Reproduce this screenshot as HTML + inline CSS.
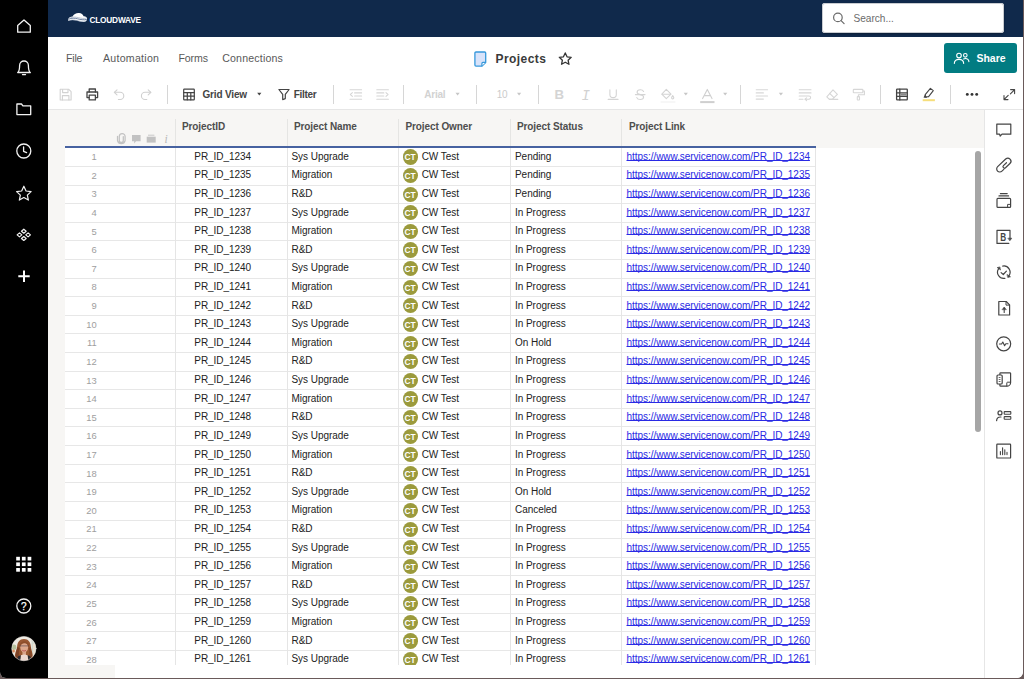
<!DOCTYPE html>
<html lang="en">
<head>
<meta charset="utf-8">
<title>Projects</title>
<style>
*{box-sizing:border-box;margin:0;padding:0}
html,body{width:1024px;height:679px;overflow:hidden;background:#6a5a5a;font-family:"Liberation Sans",Arial,sans-serif}
#app{position:absolute;left:0;top:0;width:1023px;height:678px;background:#fff;border-radius:0 0 6px 6px;overflow:hidden}
.ov{position:absolute;left:0;top:0;overflow:visible}
#side{position:absolute;left:0;top:0;width:48px;height:678px;background:#000}
#side svg{position:absolute;left:0}
#top{position:absolute;left:48px;top:0;width:976px;height:37px;background:#10294b}
#search{position:absolute;left:774.3px;top:3px;width:181.4px;height:30.2px;background:#fff;border-radius:3px;box-shadow:0 0 0 1px #c9ccd1 inset, 0 1px 2px rgba(0,0,0,.3)}
#search span{position:absolute;left:31.2px;top:10.4px;font-size:10.1px;line-height:12px;color:#6b6b6b}
#logo{position:absolute;left:41.4px;top:16px;font-size:8.3px;letter-spacing:-.2px;font-weight:bold;color:#fff;line-height:9px}
#menu span{position:absolute;top:52.3px;font-size:10.6px;color:#595959;line-height:12px;white-space:nowrap}
#title{position:absolute;left:495.6px;top:52.2px;font-size:12px;font-weight:bold;color:#3a3a3a;line-height:15px;letter-spacing:.42px}
#share{position:absolute;left:944.4px;top:43.1px;width:72.7px;height:29.8px;background:#027c82;border-radius:3px;color:#fff;font-weight:bold;font-size:10.5px}
#share span{position:absolute;left:32px;top:9px;line-height:12px}
#tb{position:absolute;left:48px;top:78px;width:976px;height:32px;border-bottom:1px solid #e6e6e6;background:#fff}
#tb .sep{position:absolute;top:7px;width:1px;height:18.8px;background:#d6d6d6}
#tb .t{position:absolute;top:10.6px;font-size:10px;line-height:12px;font-weight:bold;color:#444;white-space:nowrap}
#tb .g{color:#cbcbcb;font-weight:normal}
#tb svg{position:absolute}
#gridbg{position:absolute;left:48px;top:110px;width:936px;height:568px;background:#f7f6f4}
#white{position:absolute;left:65px;top:148px;width:919px;height:530px;background:#fff}
#hdr span{position:absolute;top:121px;font-size:10px;font-weight:bold;color:#4e4e4e;letter-spacing:-.1px;line-height:12px;white-space:nowrap}
#hdr i{position:absolute;top:119px;width:1px;height:29px;background:#e5e5e3}
#blue{position:absolute;left:65px;top:146.45px;width:750.8px;height:1.7px;background:#4762a0}
.row{position:absolute;left:65px;width:750.8px;height:18.615px;border-bottom:1px solid #e7e7e7;font-size:10px;letter-spacing:-.045px;line-height:12px;color:#222;white-space:nowrap;background:#fff}
.row span{position:absolute;top:3px}
.row .n{left:0;width:31.5px;text-align:right;color:#9e9e9e;font-size:9.4px;top:2.9px;letter-spacing:-.1px}
.row .c{height:17.6px;top:0;padding-top:2.4px}
.c1{left:110px;width:112px;padding-left:19.3px}
.c2{left:221.5px;width:111.5px;padding-left:5px}
.c3{left:333px;width:111.5px;padding-left:23.7px}
.c4{left:444.5px;width:111.5px;padding-left:5.5px}
.c5{left:556px;width:194px;padding-left:5.5px;color:#2a2ae4}
.c5 u{text-decoration:underline;text-underline-offset:.4px;text-decoration-thickness:.9px;text-decoration-skip-ink:none}
.av{position:absolute;left:4.5px;top:1.1px;width:15.2px;height:15.2px;border-radius:50%;background:#9b9a3c;color:#fff;font-style:normal;font-weight:bold;font-size:8.4px;line-height:16px;text-align:center;letter-spacing:-.1px}
#rail{position:absolute;left:984px;top:110px;width:39px;height:568px;background:#fff;border-left:1px solid #e6e6e6}
#scroll{position:absolute;left:974.8px;top:151.2px;width:5.8px;height:281px;background:#a6a6a6;border-radius:3px}
#vl i{position:absolute;top:148px;width:1px;height:518px;background:#e5e5e5}
#foot{position:absolute;left:48px;top:665.3px;width:936px;height:13px;background:#fff}
#foot i{position:absolute;left:0;top:0;width:66.7px;height:13px;background:#f7f6f4}
</style>
</head>
<body>
<div id="app">
<div id="gridbg"></div>
<div id="white"></div>
<div id="hdr">
<i style="left:175px"></i><i style="left:286.5px"></i><i style="left:398px"></i><i style="left:509.6px"></i><i style="left:621.1px"></i>
<span style="left:182px">ProjectID</span><span style="left:294px">Project Name</span><span style="left:405.5px">Project Owner</span><span style="left:517px">Project Status</span><span style="left:629px">Project Link</span>
</div>
<div class="row" style="top:148.28px"><span class="n">1</span><span class="c c1">PR_ID_1234</span><span class="c c2">Sys Upgrade</span><span class="c c3"><i class="av">CT</i>CW Test</span><span class="c c4">Pending</span><span class="c c5"><u>https://www.servicenow.com/PR_ID_1234</u></span></div>
<div class="row" style="top:166.90px"><span class="n">2</span><span class="c c1">PR_ID_1235</span><span class="c c2">Migration</span><span class="c c3"><i class="av">CT</i>CW Test</span><span class="c c4">Pending</span><span class="c c5"><u>https://www.servicenow.com/PR_ID_1235</u></span></div>
<div class="row" style="top:185.51px"><span class="n">3</span><span class="c c1">PR_ID_1236</span><span class="c c2">R&amp;D</span><span class="c c3"><i class="av">CT</i>CW Test</span><span class="c c4">Pending</span><span class="c c5"><u>https://www.servicenow.com/PR_ID_1236</u></span></div>
<div class="row" style="top:204.12px"><span class="n">4</span><span class="c c1">PR_ID_1237</span><span class="c c2">Sys Upgrade</span><span class="c c3"><i class="av">CT</i>CW Test</span><span class="c c4">In Progress</span><span class="c c5"><u>https://www.servicenow.com/PR_ID_1237</u></span></div>
<div class="row" style="top:222.74px"><span class="n">5</span><span class="c c1">PR_ID_1238</span><span class="c c2">Migration</span><span class="c c3"><i class="av">CT</i>CW Test</span><span class="c c4">In Progress</span><span class="c c5"><u>https://www.servicenow.com/PR_ID_1238</u></span></div>
<div class="row" style="top:241.35px"><span class="n">6</span><span class="c c1">PR_ID_1239</span><span class="c c2">R&amp;D</span><span class="c c3"><i class="av">CT</i>CW Test</span><span class="c c4">In Progress</span><span class="c c5"><u>https://www.servicenow.com/PR_ID_1239</u></span></div>
<div class="row" style="top:259.97px"><span class="n">7</span><span class="c c1">PR_ID_1240</span><span class="c c2">Sys Upgrade</span><span class="c c3"><i class="av">CT</i>CW Test</span><span class="c c4">In Progress</span><span class="c c5"><u>https://www.servicenow.com/PR_ID_1240</u></span></div>
<div class="row" style="top:278.58px"><span class="n">8</span><span class="c c1">PR_ID_1241</span><span class="c c2">Migration</span><span class="c c3"><i class="av">CT</i>CW Test</span><span class="c c4">In Progress</span><span class="c c5"><u>https://www.servicenow.com/PR_ID_1241</u></span></div>
<div class="row" style="top:297.20px"><span class="n">9</span><span class="c c1">PR_ID_1242</span><span class="c c2">R&amp;D</span><span class="c c3"><i class="av">CT</i>CW Test</span><span class="c c4">In Progress</span><span class="c c5"><u>https://www.servicenow.com/PR_ID_1242</u></span></div>
<div class="row" style="top:315.81px"><span class="n">10</span><span class="c c1">PR_ID_1243</span><span class="c c2">Sys Upgrade</span><span class="c c3"><i class="av">CT</i>CW Test</span><span class="c c4">In Progress</span><span class="c c5"><u>https://www.servicenow.com/PR_ID_1243</u></span></div>
<div class="row" style="top:334.43px"><span class="n">11</span><span class="c c1">PR_ID_1244</span><span class="c c2">Migration</span><span class="c c3"><i class="av">CT</i>CW Test</span><span class="c c4">On Hold</span><span class="c c5"><u>https://www.servicenow.com/PR_ID_1244</u></span></div>
<div class="row" style="top:353.04px"><span class="n">12</span><span class="c c1">PR_ID_1245</span><span class="c c2">R&amp;D</span><span class="c c3"><i class="av">CT</i>CW Test</span><span class="c c4">In Progress</span><span class="c c5"><u>https://www.servicenow.com/PR_ID_1245</u></span></div>
<div class="row" style="top:371.66px"><span class="n">13</span><span class="c c1">PR_ID_1246</span><span class="c c2">Sys Upgrade</span><span class="c c3"><i class="av">CT</i>CW Test</span><span class="c c4">In Progress</span><span class="c c5"><u>https://www.servicenow.com/PR_ID_1246</u></span></div>
<div class="row" style="top:390.27px"><span class="n">14</span><span class="c c1">PR_ID_1247</span><span class="c c2">Migration</span><span class="c c3"><i class="av">CT</i>CW Test</span><span class="c c4">In Progress</span><span class="c c5"><u>https://www.servicenow.com/PR_ID_1247</u></span></div>
<div class="row" style="top:408.89px"><span class="n">15</span><span class="c c1">PR_ID_1248</span><span class="c c2">R&amp;D</span><span class="c c3"><i class="av">CT</i>CW Test</span><span class="c c4">In Progress</span><span class="c c5"><u>https://www.servicenow.com/PR_ID_1248</u></span></div>
<div class="row" style="top:427.50px"><span class="n">16</span><span class="c c1">PR_ID_1249</span><span class="c c2">Sys Upgrade</span><span class="c c3"><i class="av">CT</i>CW Test</span><span class="c c4">In Progress</span><span class="c c5"><u>https://www.servicenow.com/PR_ID_1249</u></span></div>
<div class="row" style="top:446.12px"><span class="n">17</span><span class="c c1">PR_ID_1250</span><span class="c c2">Migration</span><span class="c c3"><i class="av">CT</i>CW Test</span><span class="c c4">In Progress</span><span class="c c5"><u>https://www.servicenow.com/PR_ID_1250</u></span></div>
<div class="row" style="top:464.74px"><span class="n">18</span><span class="c c1">PR_ID_1251</span><span class="c c2">R&amp;D</span><span class="c c3"><i class="av">CT</i>CW Test</span><span class="c c4">In Progress</span><span class="c c5"><u>https://www.servicenow.com/PR_ID_1251</u></span></div>
<div class="row" style="top:483.35px"><span class="n">19</span><span class="c c1">PR_ID_1252</span><span class="c c2">Sys Upgrade</span><span class="c c3"><i class="av">CT</i>CW Test</span><span class="c c4">On Hold</span><span class="c c5"><u>https://www.servicenow.com/PR_ID_1252</u></span></div>
<div class="row" style="top:501.96px"><span class="n">20</span><span class="c c1">PR_ID_1253</span><span class="c c2">Migration</span><span class="c c3"><i class="av">CT</i>CW Test</span><span class="c c4">Canceled</span><span class="c c5"><u>https://www.servicenow.com/PR_ID_1253</u></span></div>
<div class="row" style="top:520.58px"><span class="n">21</span><span class="c c1">PR_ID_1254</span><span class="c c2">R&amp;D</span><span class="c c3"><i class="av">CT</i>CW Test</span><span class="c c4">In Progress</span><span class="c c5"><u>https://www.servicenow.com/PR_ID_1254</u></span></div>
<div class="row" style="top:539.19px"><span class="n">22</span><span class="c c1">PR_ID_1255</span><span class="c c2">Sys Upgrade</span><span class="c c3"><i class="av">CT</i>CW Test</span><span class="c c4">In Progress</span><span class="c c5"><u>https://www.servicenow.com/PR_ID_1255</u></span></div>
<div class="row" style="top:557.81px"><span class="n">23</span><span class="c c1">PR_ID_1256</span><span class="c c2">Migration</span><span class="c c3"><i class="av">CT</i>CW Test</span><span class="c c4">In Progress</span><span class="c c5"><u>https://www.servicenow.com/PR_ID_1256</u></span></div>
<div class="row" style="top:576.42px"><span class="n">24</span><span class="c c1">PR_ID_1257</span><span class="c c2">R&amp;D</span><span class="c c3"><i class="av">CT</i>CW Test</span><span class="c c4">In Progress</span><span class="c c5"><u>https://www.servicenow.com/PR_ID_1257</u></span></div>
<div class="row" style="top:595.04px"><span class="n">25</span><span class="c c1">PR_ID_1258</span><span class="c c2">Sys Upgrade</span><span class="c c3"><i class="av">CT</i>CW Test</span><span class="c c4">In Progress</span><span class="c c5"><u>https://www.servicenow.com/PR_ID_1258</u></span></div>
<div class="row" style="top:613.65px"><span class="n">26</span><span class="c c1">PR_ID_1259</span><span class="c c2">Migration</span><span class="c c3"><i class="av">CT</i>CW Test</span><span class="c c4">In Progress</span><span class="c c5"><u>https://www.servicenow.com/PR_ID_1259</u></span></div>
<div class="row" style="top:632.27px"><span class="n">27</span><span class="c c1">PR_ID_1260</span><span class="c c2">R&amp;D</span><span class="c c3"><i class="av">CT</i>CW Test</span><span class="c c4">In Progress</span><span class="c c5"><u>https://www.servicenow.com/PR_ID_1260</u></span></div>
<div class="row" style="top:650.88px"><span class="n">28</span><span class="c c1">PR_ID_1261</span><span class="c c2">Sys Upgrade</span><span class="c c3"><i class="av">CT</i>CW Test</span><span class="c c4">In Progress</span><span class="c c5"><u>https://www.servicenow.com/PR_ID_1261</u></span></div>
<div id="vl"><i style="left:175px"></i><i style="left:286.5px"></i><i style="left:398px"></i><i style="left:509.6px"></i><i style="left:621.1px"></i><i style="left:815.2px"></i></div>
<div id="blue"></div>
<div id="foot"><i></i></div>
<div id="scroll"></div>
<div id="rail"></div>
<div id="top">
<div id="logo">CLOUDWAVE</div>
<div id="search"><span>Search...</span></div>
</div>
<svg id="sv-top" class="ov" style="left:48px;top:0" width="976" height="37" viewBox="48 0 976 37" fill="none">
<!-- cloud logo -->
<path d="M68.2 19.4 C68.6 17.6 70.6 16.6 72.6 16.6 C73.6 14 76.4 12.8 79 13 C81.4 13.2 83 14.6 83.6 16.2 C85.6 16 87 17.2 87.1 18.6 C87.2 20.2 86.4 21.4 85 21.8 C82 22.4 79.6 21.4 76.6 20.6 C73.6 19.8 70.8 19.6 68.4 21 Z" fill="#fff"/>
<path d="M68.6 19.2 C71.6 17.8 74.6 18 77.6 18.8 C80.6 19.6 83.6 20.2 86.8 19.4" stroke="#4a6186" stroke-width=".8"/>
<path d="M70.4 17.6 C73 16.8 75.8 17 78.6 17.7 C81.4 18.4 84 18.8 86.6 18" stroke="#8797b0" stroke-width=".6"/>
<path d="M69 20.6 C71.6 19.6 74.4 19.8 77 20.5 C79.8 21.3 82.6 21.8 85.6 21" stroke="#7f90ab" stroke-width=".5"/>
<!-- search icon -->
<circle cx="837.9" cy="17.4" r="4.3" stroke="#6a6a6a" stroke-width="1.2"/>
<path d="M841.1 20.6 L844.1 23.6" stroke="#6a6a6a" stroke-width="1.2" stroke-linecap="round"/>
</svg>

<div id="menu"><span style="left:66px;letter-spacing:-.2px">File</span><span style="left:103px;letter-spacing:.26px">Automation</span><span style="left:178.4px;letter-spacing:-.1px">Forms</span><span style="left:222.2px;letter-spacing:.18px">Connections</span></div>
<div id="title">Projects</div>
<div id="share"><span>Share</span></div>
<div id="tb">
<i class="sep" style="left:119px"></i>
<span class="t" style="left:154.4px;letter-spacing:-.15px">Grid View</span>
<span class="t" style="left:245.8px;letter-spacing:-.3px">Filter</span>
<i class="sep" style="left:285.4px"></i>
<i class="sep" style="left:355.4px"></i>
<span class="t g" style="left:376.3px;font-weight:bold;letter-spacing:-.25px;color:#d2d2d2">Arial</span>
<i class="sep" style="left:427.8px"></i>
<span class="t g" style="left:448.8px;letter-spacing:-.3px">10</span>
<i class="sep" style="left:489.5px"></i>
<span class="t g" style="left:506.4px;top:9px;font-size:13.2px;line-height:15px;font-weight:bold;color:#d4d4d4">B</span>
<span class="t g" style="left:533.6px;top:10.6px;font-size:14.2px;line-height:15px;font-style:italic;font-family:'Liberation Mono',monospace;color:#d2d2d2">I</span>
<i class="sep" style="left:691.8px"></i>
<i class="sep" style="left:832px"></i>
<i class="sep" style="left:902.1px"></i>
</div>
<svg id="sv-tb" class="ov" style="left:48px;top:37px" width="976" height="72" viewBox="48 37 976 72" fill="none" stroke-linejoin="round" stroke-linecap="round">
<!-- sheet icon -->
<path d="M476 52 H484.6 a1.1 1.1 0 0 1 1.1 1.1 V62.6 L482 66.1 H476 a1.1 1.1 0 0 1 -1.1 -1.1 V53.1 A1.1 1.1 0 0 1 476 52 Z" fill="#d8e3fa" stroke="#3698db" stroke-width="1.3"/>
<path d="M485.4 62.4 H482.9 a1 1 0 0 0 -1 1 V65.8" fill="#fff" stroke="#3698db" stroke-width="1.2"/>
<!-- title star -->
<path d="M565.25 52.9 L567.05 56.8 L571.2 57.3 L568.1 60.2 L568.95 64.3 L565.25 62.25 L561.55 64.3 L562.4 60.2 L559.3 57.3 L563.45 56.8 Z" stroke="#333" stroke-width="1.3"/>
<!-- share people -->
<g stroke="#fff" stroke-width="1.1">
<circle cx="959" cy="55.6" r="2.3"/>
<path d="M954.3 63.4 C954.5 60.6 956.4 59.4 959 59.4 C961.6 59.4 963.5 60.6 963.7 63.4"/>
<circle cx="965.3" cy="55.3" r="1.8"/>
<path d="M963.6 58.9 C964.2 58.6 964.8 58.5 965.4 58.5 C967.4 58.5 968.7 59.6 968.9 61.6"/>
</g>
<!-- save (disabled) -->
<g stroke="#d2d2d2" stroke-width="1.1">
<path d="M60.2 89.3 H68.8 L71.1 91.6 V100 H60.2 Z"/>
<path d="M62.6 89.5 V92.6 H68 V89.5"/>
<path d="M62.4 100 V95.6 H68.9 V100"/>
</g>
<!-- print -->
<g stroke="#444" stroke-width="1.3">
<path d="M89.2 92 V89 H95.4 V92"/>
<path d="M89 97.6 H87 V92 H97.6 V97.6 H95.6"/>
<path d="M89.2 95.2 H95.4 V99.9 H89.2 Z"/>
</g>
<!-- undo -->
<g stroke="#d0d0d0" stroke-width="1.1">
<path d="M117 89.8 L114.3 92.3 L117 94.8"/>
<path d="M114.6 92.3 H120.2 a3.6 3.6 0 0 1 0 7.2 H118.4"/>
</g>
<!-- redo -->
<g stroke="#d0d0d0" stroke-width="1.1">
<path d="M148.2 89.8 L150.9 92.3 L148.2 94.8"/>
<path d="M150.6 92.3 H145 a3.6 3.6 0 0 0 0 7.2 H146.8"/>
</g>
<!-- grid view icon -->
<g stroke="#444" stroke-width="1.2">
<rect x="183.7" y="89.2" width="10.6" height="10.6" rx=".6"/>
<path d="M183.7 92.6 H194.3 M183.7 96.2 H194.3 M187.3 92.6 V99.8 M190.8 92.6 V99.8"/>
</g>
<path d="M257.2 92.8 H261.4 L259.3 95.6 Z" fill="#444" stroke="none"/>
<!-- filter -->
<path d="M278.9 89.5 H289.1 L285.3 94.4 V98.6 L282.7 99.6 V94.4 Z" stroke="#444" stroke-width="1.2"/>
<!-- outdent -->
<g stroke="#d6d6d6" stroke-width="1.1">
<path d="M350 89.8 H361.6 M350 99.2 H361.6 M354.6 92.9 H361.6 M354.6 96 H361.6"/>
<path d="M352.4 92.6 L350.4 94.5 L352.4 96.4"/>
</g>
<!-- indent -->
<g stroke="#d6d6d6" stroke-width="1.1">
<path d="M376.8 89.8 H388.4 M376.8 99.2 H388.4 M376.8 92.9 H383.8 M376.8 96 H383.8"/>
<path d="M386 92.6 L388 94.5 L386 96.4"/>
</g>
<path d="M455.5 92.8 H459.7 L457.6 95.6 Z" fill="#c6c6c6" stroke="none"/>
<path d="M517.0 92.8 H521.2 L519.1 95.6 Z" fill="#c6c6c6" stroke="none"/>
<!-- underline U -->
<g stroke="#d4d4d4" stroke-width="1.1">
<path d="M609.9 89.9 V94.4 a3.2 3.2 0 0 0 6.4 0 V89.9"/>
<path d="M608.2 99.4 H618"/>
</g>
<!-- strike S -->
<g stroke="#d4d4d4" stroke-width="1.1">
<path d="M643.6 91.4 C643 90.3 641.8 89.8 640.3 89.8 C638.4 89.8 637.1 90.8 637.1 92.2 C637.1 93.6 638.4 94.2 640.3 94.6 C642.2 95 643.6 95.6 643.6 97.1 C643.6 98.6 642.2 99.5 640.3 99.5 C638.6 99.5 637.3 98.8 636.8 97.6"/>
<path d="M635.4 94.6 H645"/>
</g>
<!-- fill bucket -->
<g stroke="#d4d4d4" stroke-width="1.1">
<path d="M666.3 89.4 L671 94.1 L666.3 98.6 L661.8 94.1 Z"/>
<path d="M662.2 94.2 H670.6"/>
<path d="M672.7 95.6 C673.4 96.6 673.8 97.2 673.8 97.8 a1.1 1.1 0 0 1 -2.2 0 C671.6 97.2 672 96.6 672.7 95.6 Z"/>
</g>
<path d="M661 102 H675" stroke="#efefef" stroke-width="1"/>
<path d="M683.7 92.8 H687.9 L685.8 95.6 Z" fill="#c6c6c6" stroke="none"/>
<!-- text color A -->
<g stroke="#d0d0d0" stroke-width="1.1">
<path d="M702.6 98.6 L707.3 89.4 L712 98.6 M704.2 95.6 H710.4"/>
</g>
<rect x="700.2" y="101.1" width="14.3" height="2" fill="#cfcfcf"/>
<path d="M723.1 92.8 H727.3 L725.2 95.6 Z" fill="#c6c6c6" stroke="none"/>
<!-- align -->
<path d="M756.2 89.8 H767.6 M756.2 92.9 H763.4 M756.2 96 H767.6 M756.2 99.1 H763.4" stroke="#d8d8d8" stroke-width="1.1"/>
<path d="M778.8 92.8 H783.0 L780.9 95.6 Z" fill="#c6c6c6" stroke="none"/>
<!-- wrap -->
<g stroke="#d6d6d6" stroke-width="1.1">
<path d="M799.2 89.8 H811 M799.2 92.9 H811 M799.2 96 H809 a1.6 1.6 0 0 1 0 3.2 H805.2 M799.2 99.2 H803"/>
<path d="M806.6 97.8 L805 99.2 L806.6 100.6"/>
</g>
<!-- eraser -->
<g stroke="#d6d6d6" stroke-width="1.1">
<path d="M833 89.9 L837.4 94.3 L832.2 99.4 H829.4 L826.8 96.8 Z"/>
<path d="M829.4 99.4 H837.8"/>
<path d="M829.6 93.4 L834 97.7"/>
</g>
<!-- roller -->
<g stroke="#d6d6d6" stroke-width="1.1">
<rect x="853.3" y="89.4" width="9.6" height="3.4" rx=".6"/>
<path d="M862.9 91 H864.4 V94.8 H858.4 V96.6"/>
<rect x="857.3" y="96.6" width="2.2" height="3.4" rx=".4"/>
</g>
<!-- table/list dark -->
<g stroke="#444" stroke-width="1.3">
<rect x="896.6" y="89.2" width="10.7" height="10.7" rx=".6"/>
<path d="M896.6 92.8 H907.3 M896.6 96.3 H907.3 M899.8 89.2 V99.9"/>
</g>
<path d="M900.4 94.55 H906.8" stroke="#8a8a8a" stroke-width="2.2" stroke-linecap="butt"/>
<!-- highlighter -->
<g stroke="#444" stroke-width="1.1">
<path d="M930.4 88.4 L933.3 90.6 L928.6 96.6 L925.5 96.9 L925.2 94.6 Z"/>
<path d="M925.4 95 L924.2 97.2 H926.4"/>
</g>
<rect x="922.7" y="99.2" width="12.2" height="2" fill="#f6de7c"/>
<!-- dots -->
<g fill="#333" stroke="none"><circle cx="967.3" cy="94.4" r="1.45"/><circle cx="972" cy="94.4" r="1.45"/><circle cx="976.7" cy="94.4" r="1.45"/></g>
<!-- expand -->
<g stroke="#444" stroke-width="1.1">
<path d="M1010.6 89.6 H1014.6 V93.6 M1014.4 89.8 L1010.4 93.8"/>
<path d="M1008 99.6 H1004 V95.6 M1004.2 99.4 L1008.2 95.4"/>
</g>
</svg>

<svg id="sv-rail" class="ov" style="left:48px;top:109px" width="976" height="400" viewBox="48 109 976 400" fill="none" stroke-linejoin="round" stroke-linecap="round">
<!-- header: paperclip -->
<path d="M123.3 136.6 V140.4 a2 2 0 0 1 -4 0 V136.4 a2.9 2.9 0 0 1 5.8 0 V140.6 a3.9 3.9 0 0 1 -7.6 0 V136.4" stroke="#c2c2c2" stroke-width="1.25"/>
<!-- header: comment -->
<path d="M132 134.9 H140.6 V141.3 H136 L134.2 143.5 V141.3 H132 Z" fill="#c2c2c2" stroke="none"/>
<!-- header: proof stack -->
<path d="M146.7 136.7 H155.7 V142.6 H146.7 Z" fill="#c2c2c2" stroke="none"/>
<path d="M148.4 135.2 H154" stroke="#c8c8c8" stroke-width="1"/>
<text x="166.2" y="142.6" font-family="Liberation Serif, serif" font-style="italic" font-size="11.5" fill="#b8b8b8" stroke="none" text-anchor="middle">i</text>
<!-- rail: comment -->
<g stroke="#444" stroke-width="1.2">
<path d="M996.8 124.1 H1010.8 V134.2 H1002 L1000.2 136 L999.6 134.2 H996.8 Z"/>
<!-- paperclip -->
<path d="M1006.47 162.70 L1003.42 165.60 A1.5 1.5 0 0 0 1005.49 167.77 L1009.94 163.55 A3.1 3.1 0 0 0 1005.66 159.05 L997.66 166.65 A3.1 3.1 0 0 0 1001.94 171.15 L1003.82 169.36"/>
<!-- proofs stack -->
<path d="M1000.4 193.6 H1007.2 M999 195.9 H1008.6"/>
<rect x="997" y="198.4" width="13.6" height="9" rx=".9"/>
<path d="M1010.4 204.4 H1007.6 V207.2" stroke-width="1"/>
<!-- B down -->
<path d="M1010 239 V230.3 H997 V243.4 H1008.8"/>
<path d="M1008.2 238.2 H1011.8 L1010 240.6 Z" fill="#444" stroke-width=".6"/>
<text transform="translate(1003.2 240.8) scale(.72 1)" font-family="Liberation Sans, Arial, sans-serif" font-size="11.4" font-weight="bold" fill="#444" stroke="none" text-anchor="middle">B</text>
<!-- sync -->
<path d="M1002.7 266.1 A6.2 6.2 0 0 1 1008.9 275.8"/>
<path d="M1008 277.4 L1010.5 276.8 L1007.3 274.6 Z" fill="#444" stroke-width=".6"/>
<path d="M1004.9 278.3 A6.2 6.2 0 0 1 998.7 268.6"/>
<path d="M999.6 267 L997.1 267.6 L1000.3 269.8 Z" fill="#444" stroke-width=".6"/>
<path d="M1001.1 272.6 L1003.3 274.5 L1006.4 271.2" stroke-width="1.2"/>
<!-- file upload -->
<path d="M998.8 301.5 H1006.2 L1009.6 304.9 V315 H998.8 Z"/>
<path d="M1006 301.7 V305.1 H1009.4" stroke-width="1"/>
<path d="M1004.2 312.4 V308" stroke-width="1.1"/><path d="M1002.2 309.4 L1004.2 307 L1006.2 309.4 Z" fill="#444" stroke-width=".5"/>
<!-- activity -->
<circle cx="1003.7" cy="343.8" r="7"/>
<path d="M999.4 344 H1001.6 L1002.8 342 L1004.6 345.8 L1005.8 343.8 H1008" stroke-width="1.1"/>
<!-- summary -->
<path d="M999.9 375 V373.6 a.8 .8 0 0 1 .8 -.8 H1009.8 a.8 .8 0 0 1 .8 .8 V382.4 C1010.6 384.4 1008.8 386.2 1006.8 386.2 H1000.7 a.8 .8 0 0 1 -.8 -.8 V384"/>
<path d="M1010.4 382.2 H1007.6 a.8 .8 0 0 0 -.8 .8 V386" stroke-width="1"/>
<rect x="997" y="375" width="5.2" height="9" rx="1" fill="#fff"/>
<path d="M999.1 377.5 H1000.1 M999.1 379.5 H1000.1 M999.1 381.5 H1000.1" stroke-width=".8"/>
<!-- person list -->
<circle cx="1000" cy="412.9" r="2"/>
<path d="M996.6 420.6 C996.8 418.2 998 417 1000.4 417 H1001"/>
<rect x="1004.2" y="411.6" width="6.6" height="2.6" rx=".5" stroke-width="1.1"/>
<rect x="1004.2" y="416.6" width="6.6" height="2.6" rx=".5" stroke-width="1.1"/>
<!-- chart -->
<rect x="996.8" y="444.2" width="13.8" height="13.8" rx=".6"/>
<path d="M1000.4 454.6 V451.6 M1002.6 454.6 V447.8 M1004.8 454.6 V449.8 M1007 454.6 V452.4" stroke-width="1.1"/>
</g>
</svg>

<div id="side"><svg id="sv-side" class="ov" width="48" height="678" viewBox="0 0 48 678" fill="none" stroke="#f2f2f2" stroke-width="1.3" stroke-linejoin="round" stroke-linecap="round">
<!-- home -->
<path d="M17.7 25.6 L24 19.9 L30.3 25.6 V32.2 H17.7 Z"/>
<!-- bell -->
<path d="M17.7 72.5 C19.5 71.2 19.6 69.4 19.6 65.4 a4.4 4.4 0 0 1 8.8 0 C28.4 69.4 28.5 71.2 30.3 72.5 Z"/>
<path d="M22.4 74.6 H25.6" stroke-width="1.1"/>
<!-- folder -->
<path d="M16.9 104 h4.6 l1.4 1.8 h7.8 v8.8 h-13.8 z"/>
<!-- clock -->
<circle cx="23.8" cy="151" r="7"/>
<path d="M23.6 147 V151.4 L26.6 152.6"/>
<!-- star -->
<path d="M23.85 186.2 L26.05 191 L31.1 191.6 L27.35 195.1 L28.35 200.1 L23.85 197.6 L19.35 200.1 L20.35 195.1 L16.6 191.6 L21.65 191 Z" stroke-width="1.2"/>
<!-- diamonds -->
<g stroke-width="1.2">
<path d="M23.8 229.20 L26.15 231.2 L23.8 233.20 L21.45 231.2 Z"/>
<path d="M19.5 232.85 L21.85 234.85 L19.5 236.85 L17.15 234.85 Z"/>
<path d="M28.1 232.85 L30.45 234.85 L28.1 236.85 L25.75 234.85 Z"/>
<path d="M23.8 236.50 L26.15 238.5 L23.8 240.50 L21.45 238.5 Z"/>
</g>
<!-- plus -->
<path d="M24 270.6 V282 M18.3 276.3 H29.7" stroke-width="2" stroke="#fff" stroke-linecap="butt"/>
<!-- apps grid -->
<g fill="#fff" stroke="none">
<rect x="16.2" y="556.8" width="3.7" height="3.7"/><rect x="21.9" y="556.8" width="3.7" height="3.7"/><rect x="27.6" y="556.8" width="3.7" height="3.7"/>
<rect x="16.2" y="562.4" width="3.7" height="3.7"/><rect x="21.9" y="562.4" width="3.7" height="3.7"/><rect x="27.6" y="562.4" width="3.7" height="3.7"/>
<rect x="16.2" y="568" width="3.7" height="3.7"/><rect x="21.9" y="568" width="3.7" height="3.7"/><rect x="27.6" y="568" width="3.7" height="3.7"/>
</g>
<!-- help -->
<circle cx="23.8" cy="606" r="7"/>
<text x="23.8" y="609.7" font-family="Liberation Sans, Arial, sans-serif" font-size="10" fill="#fff" stroke="#fff" stroke-width=".25" text-anchor="middle">?</text>
<!-- avatar -->
<defs><clipPath id="avc"><circle cx="23.9" cy="648.6" r="12.15"/></clipPath>
<filter id="avb" x="-10%" y="-10%" width="120%" height="120%"><feGaussianBlur stdDeviation="0.45"/></filter></defs>
<g clip-path="url(#avc)" stroke="none"><g filter="url(#avb)">
<rect x="9" y="634" width="30" height="30" fill="#efebe3"/>
<rect x="31.5" y="640" width="6" height="22" fill="#d2d8cf"/>
<rect x="33" y="644" width="2" height="12" fill="#e9e0cf"/>
<ellipse cx="14" cy="647.2" rx="2.4" ry="2.6" fill="#b7c29d"/>
<ellipse cx="13.2" cy="651" rx="1.8" ry="1.6" fill="#dc8f62"/>
<path d="M24 639 C19.5 639 17.4 642.4 17.2 646 C17 649.6 15.2 651.6 15 655 C14.8 658 15.6 660 16.6 662 H31.4 C32.6 660 33 657.6 32.6 654.6 C32.2 651.4 31 649.4 30.8 646 C30.6 642.4 28.5 639 24 639 Z" fill="#9a5832"/>
<path d="M17.4 647 C16.6 651 15.4 653 15.6 656.6 C15.8 659 16.4 660.4 17.4 662 H20 C18.4 658 18.6 652 19.6 648 Z" fill="#7c4226"/>
<path d="M30.4 647 C31 651 32.2 653 32 656.6 C31.8 659 31.4 660.4 30.6 662 H28 C29.6 658 29.6 652 28.6 648 Z" fill="#84482a"/>
<path d="M22.4 651 h3.6 v4.6 h-3.6 z" fill="#d9a389"/>
<path d="M20.6 655.2 L24.2 654.6 L27.8 655.2 L28.8 662 H19.8 Z" fill="#edd8d1"/>
<path d="M18 656.4 L20.8 655 L20.2 662 H16.4 Z" fill="#2b2a30"/>
<path d="M30.4 656.4 L27.6 655 L28.6 662 H32 Z" fill="#2b2a30"/>
<ellipse cx="24.2" cy="647.5" rx="3.9" ry="5.1" fill="#dda88c"/>
<path d="M19.6 646.4 C19.8 642.4 22.4 641 25 641.2 C27.6 641.4 29 643.4 28.9 646.2 C27.8 644 26 643 24.4 643.2 C22.4 643.4 20.6 644.6 19.6 646.4 Z" fill="#8e4f2c"/>
<path d="M20.2 645.9 H28.4" stroke="#3f3848" stroke-width=".55"/>
<path d="M22.6 650.5 C23.6 651.2 24.8 651.2 25.8 650.5" stroke="#b8484e" stroke-width=".9" fill="none"/>
</g></g>
<circle cx="23.9" cy="648.6" r="12.15" stroke="#f4f0ea" stroke-width=".5"/>
</svg>
</div>
</div>
</body>
</html>
